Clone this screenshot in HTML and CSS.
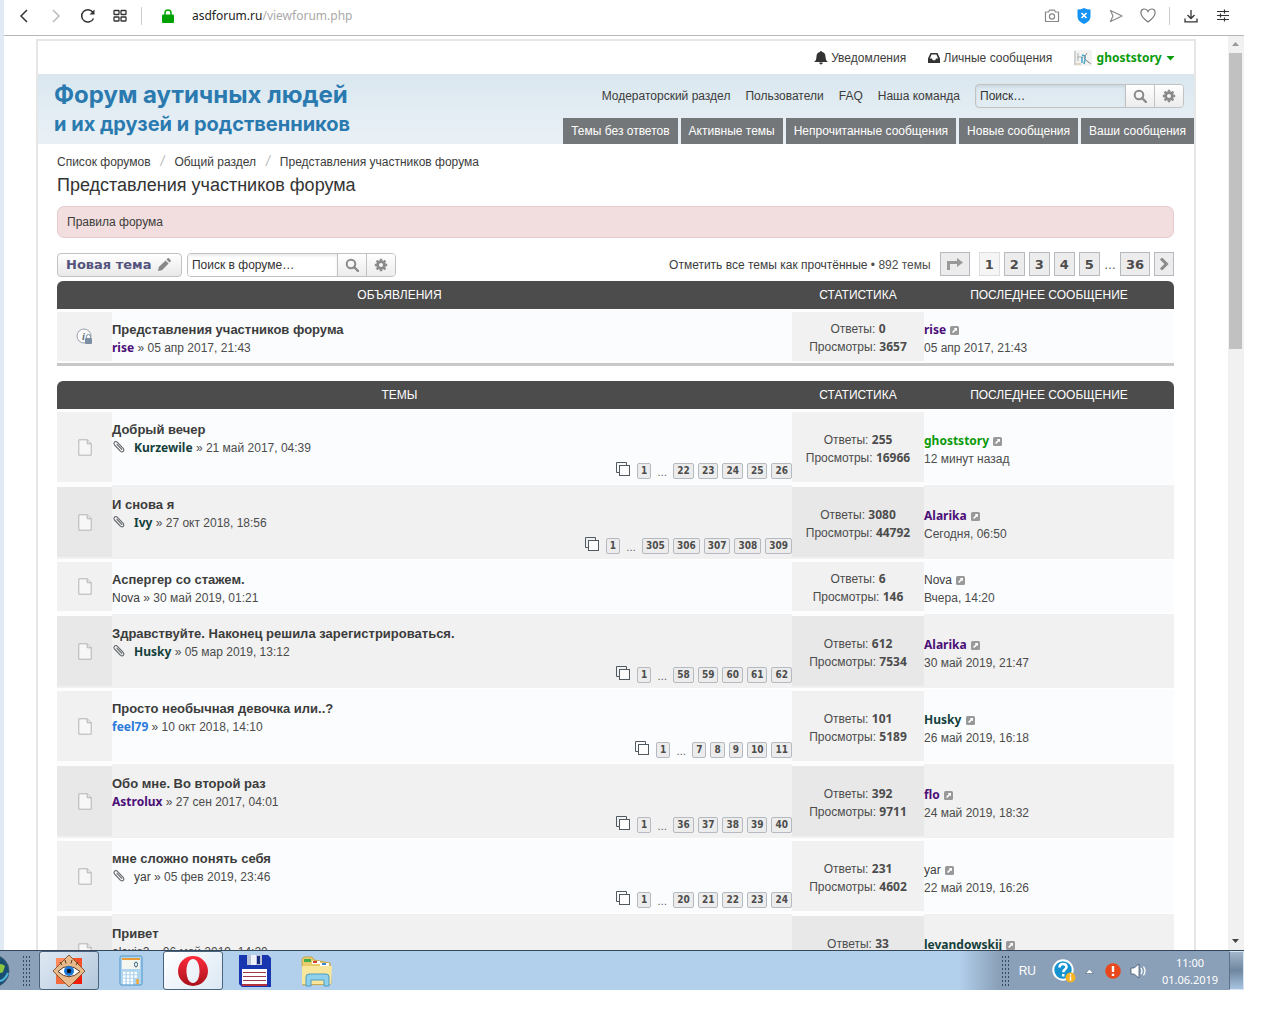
FILE: index.html
```html
<!DOCTYPE html>
<html lang="ru">
<head>
  <meta charset="UTF-8">
  <meta name="viewport" content="width=device-width, initial-scale=1">
  <title>Представления участников форума</title>
  <link rel="stylesheet" href="styles.css">
</head>
<body>
  <svg class="sprite" aria-hidden="true">
    <symbol id="i-search" viewBox="0 0 14 14"><circle cx="6" cy="6" r="4.3" fill="none" stroke="currentColor" stroke-width="2"/><path d="M9 9l4 4" stroke="currentColor" stroke-width="2.4" stroke-linecap="round"/></symbol>
    <symbol id="i-gear" viewBox="0 0 14 14"><circle cx="7" cy="7" r="3.4" fill="none" stroke="currentColor" stroke-width="2.8"/><path d="M7 .8v2M7 11.2v2M.8 7h2M11.2 7h2M2.6 2.6l1.5 1.5M9.9 9.9l1.5 1.5M2.6 11.4l1.5-1.5M9.9 4.1l1.5-1.5" stroke="currentColor" stroke-width="2.4"/></symbol>
    <symbol id="i-doc" viewBox="0 0 14 17"><path d="M.8 .8h8.6l3.8 3.8v11.6H.8z" fill="#f7f7f7" stroke="#b4b4b4"/><path d="M9.2 .8v4h4" fill="#e4e4e4" stroke="#b4b4b4"/></symbol>
    <symbol id="i-clip" viewBox="0 0 14 14"><path d="M3.2 5.6l5.2 5.6c.9.9 2.2.9 2.9.2.8-.8.8-2-.1-3L5.400 2.300C4.600 1.500 3.300 1.400 2.500 2.200c-.8.8-.7 2 .1 2.900l5.500 5.700M5 4.300l4.800 5.100" fill="none" stroke="#606468" stroke-width="1.100" stroke-linecap="round"/></symbol>
    <symbol id="i-pages" viewBox="0 0 15 15"><path d="M3.500 10.500h-3V.5h10v3" fill="none" stroke="#505860"/><rect x="3.500" y="3.500" width="10" height="10" fill="#fdfdfd" stroke="#505860"/></symbol>
    <symbol id="i-ext" viewBox="0 0 9 9"><rect width="9" height="9" rx="1.500" fill="#999"/><path d="M3.700 2H7v3.300L6 4.300 3.200 7.100 2 5.900l2.800-2.800z" fill="#fff"/></symbol>
  </svg>

  <div class="browser">
    <header class="toolbar">
      <button class="tool" aria-label="Назад"><svg width="10" height="14" viewBox="0 0 10 14"><path d="M8 1L2 7l6 6" fill="none" stroke="#333" stroke-width="1.500"/></svg></button>
      <button class="tool" aria-label="Вперёд"><svg width="10" height="14" viewBox="0 0 10 14"><path d="M2 1l6 6-6 6" fill="none" stroke="#bbb" stroke-width="1.500"/></svg></button>
      <button class="tool" aria-label="Обновить"><svg width="16" height="16" viewBox="0 0 16 16"><path d="M13.500 10.500A6.200 6.200 0 1 1 13 4.300" fill="none" stroke="#333" stroke-width="1.500"/><path d="M14.500 1.500v5h-5z" fill="#333"/></svg></button>
      <button class="tool" aria-label="Экспресс-панель"><svg width="14" height="14" viewBox="0 0 14 14" fill="none" stroke="#333" stroke-width="1.300"><rect x="1" y="1.500" width="5" height="4" rx=".5"/><rect x="8" y="1.500" width="5" height="4" rx=".5"/><rect x="1" y="8" width="5" height="4" rx=".5"/><rect x="8" y="8" width="5" height="4" rx=".5"/></svg></button>
      <span class="sep"></span>
      <svg class="lock" width="12" height="14" viewBox="0 0 12 14"><path d="M3 7V4a3 3 0 0 1 6 0v3" fill="none" stroke="#0a0" stroke-width="1.500"/><rect y="5.500" width="12" height="8.500" rx="1" fill="#00a000"/></svg>
      <p class="url">asdforum.ru<span>/viewforum.php</span></p>
      <button class="tool" aria-label="Снимок"><svg width="16" height="14" viewBox="0 0 16 14" fill="none" stroke="#888" stroke-width="1.200"><path d="M1.500 3h3l1-1.800h5l1 1.800h3v9.500h-13z" stroke-linejoin="round"/><circle cx="8" cy="7.500" r="2.600"/></svg></button>
      <button class="tool" aria-label="Блокировка рекламы"><svg width="14" height="16" viewBox="0 0 14 16"><path d="M.5 1.500q3.500 0 6.500-1.500 3 1.500 6.500 1.500v7Q13.500 13 7 16 .5 13 .5 8.500z" fill="#1493f5"/><path d="M4.500 5l5 5m0-5l-5 5" stroke="#fff" stroke-width="1.600"/></svg></button>
      <button class="tool" aria-label="Отправить"><svg width="14" height="14" viewBox="0 0 14 14"><path d="M1.500 1.500L13 7 1.500 12.500 4 7z" fill="none" stroke="#888" stroke-width="1.200" stroke-linejoin="round"/></svg></button>
      <button class="tool" aria-label="Закладки"><svg width="16" height="15" viewBox="0 0 16 15"><path d="M8 14Q1 9 .9 4.800C.9 2.500 2.500 1 4.400 1 6 1 7.300 2 8 3.500 8.700 2 10 1 11.600 1c1.900 0 3.500 1.500 3.500 3.800Q15 9 8 14z" fill="none" stroke="#777" stroke-width="1.200"/></svg></button>
      <span class="sep"></span>
      <button class="tool" aria-label="Загрузки"><svg width="14" height="14" viewBox="0 0 14 14" fill="none" stroke="#333" stroke-width="1.300"><path d="M7 1v8.500M3.500 6L7 9.500 10.500 6M1 9.500v3.300h12V9.500"/></svg></button>
      <button class="tool" aria-label="Настройки"><svg width="12" height="13" viewBox="0 0 12 13" fill="none" stroke="#333" stroke-width="1.200"><path d="M0 2.500h12M0 6.500h12M0 10.500h12M7.500 .5v4M3.500 4.500v4M7.500 8.500v4"/></svg></button>
    </header>

    <div class="viewport">
      <main class="page">
        <div class="wrap">
          <nav class="userbar">
            <a href="#"><svg width="14" height="14" viewBox="0 0 14 14"><path d="M7 0q1 0 1 1c3 .6 3.500 3 3.500 5q0 3.500 2.300 5H.2Q2.500 9.500 2.500 6c0-2 .5-4.400 3.500-5Q6 0 7 0zM5.200 11.600h3.600Q8.500 13.500 7 13.500t-1.800-1.900z" fill="#333"/></svg> Уведомления</a>
            <a href="#"><svg width="12" height="12" viewBox="0 0 12 12"><path d="M2.500 1h7L12 6.500V11H0V6.500zM3.600 2.500L1.900 6.500H4l.8 1.700h2.400L8 6.500h2.100L8.400 2.500z" fill="#333" fill-rule="evenodd"/></svg> Личные сообщения</a>
            <a href="#" class="me"><svg width="18" height="16" viewBox="0 0 18 16"><rect width="18" height="16" fill="#f3f4f2"/><path d="M1 1v14M3 7h6M4 3v8" stroke="#a9b0ad"/><path d="M8 5l3 1v4l-1 4M8 7v6" stroke="#48a5cb" stroke-width="1.500" fill="none"/><path d="M13 3l-3 5 5 5M12 10l5 4" stroke="#8a9797" fill="none"/><path d="M2 14h5" stroke="#d6b79a"/></svg> <b>ghoststory</b> <svg width="9" height="5" viewBox="0 0 8 5"><path d="M0 0h8L4 4.500z" fill="#0a9a0a"/></svg></a>
          </nav>

          <header class="banner">
            <h1 class="logo">Форум аутичных людей<small>и их друзей и родственников</small></h1>
            <div class="banner-right">
              <div class="links">
                <a href="#">Модераторский раздел</a>
                <a href="#">Пользователи</a>
                <a href="#">FAQ</a>
                <a href="#">Наша команда</a>
                <form class="search">
                  <input type="text" aria-label="Поиск" placeholder="Поиск…">
                  <button type="button" aria-label="Искать"><svg width="14" height="14"><use href="#i-search"/></svg></button>
                  <button type="button" aria-label="Расширенный поиск"><svg width="14" height="14"><use href="#i-gear"/></svg></button>
                </form>
              </div>
              <nav class="tabs">
                <a href="#">Темы без ответов</a>
                <a href="#">Активные темы</a>
                <a href="#">Непрочитанные сообщения</a>
                <a href="#">Новые сообщения</a>
                <a href="#">Ваши сообщения</a>
              </nav>
            </div>
          </header>

          <div class="content">
            <nav class="crumbs">
              <a href="#">Список форумов</a><i>/</i><a href="#">Общий раздел</a><i>/</i><a href="#">Представления участников форума</a>
            </nav>
            <h2>Представления участников форума</h2>
            <div class="rules"><a href="#">Правила форума</a></div>

            <div class="actions">
              <button class="new-topic">Новая тема <svg width="13" height="13" viewBox="0 0 12 12"><path d="M0 12l.8-3.600L7 2.200 9.800 5 3.600 11.200zM7.800 1.400L9 .2q.6-.4 1.200.2l1.400 1.400q.6.6.2 1.200L10.600 4.200z" fill="#888"/></svg></button>
              <form class="search light">
                <input type="text" aria-label="Поиск в форуме" placeholder="Поиск в форуме…">
                <button type="button" aria-label="Искать"><svg width="14" height="14"><use href="#i-search"/></svg></button>
                <button type="button" aria-label="Расширенный поиск"><svg width="14" height="14"><use href="#i-gear"/></svg></button>
              </form>
              <p class="mark"><a href="#">Отметить все темы как прочтённые</a> • 892 темы</p>
              <nav class="pager">
                <a href="#" class="jump" aria-label="Перейти"><svg width="18" height="14" viewBox="0 0 18 14"><path d="M1 13V4h10V1l6 4.500-6 4.500V7H4v6z" fill="#999"/></svg></a>
                <a href="#" class="current">1</a>
                <a href="#">2</a>
                <a href="#">3</a>
                <a href="#">4</a>
                <a href="#">5</a>
                <span>…</span>
                <a href="#">36</a>
                <a href="#" class="next" aria-label="Следующая"><svg width="10" height="14" viewBox="0 0 10 14"><path d="M2 1.500L7.500 7 2 12.500" fill="none" stroke="#8a8a8a" stroke-width="3"/></svg></a>
              </nav>
            </div>

            <table class="topics announce">
              <colgroup><col class="c-icon"><col><col class="c-stat"><col class="c-last"></colgroup>
              <thead>
                <tr><th colspan="2">Объявления</th><th>Статистика</th><th>Последнее сообщение</th></tr>
              </thead>
              <tbody>
                <tr>
                  <td class="icon"><svg width="18" height="18" viewBox="0 0 18 18"><circle cx="8" cy="8" r="7" fill="#fafafa" stroke="#9aa3ad"/><text x="6" y="12" class="info-i">i</text><rect x="9" y="10" width="7" height="6" rx="1" fill="#7d8ea3"/><path d="M10.500 10V8.500a2 2 0 0 1 4 0V10" fill="none" stroke="#7d8ea3"/></svg></td>
                  <td class="topic"><a href="#" class="title">Представления участников форума</a><p><a href="#" class="purple">rise</a> » 05 апр 2017, 21:43</p></td>
                  <td class="stat">Ответы: <b>0</b><br>Просмотры: <b>3657</b></td>
                  <td class="last"><a href="#" class="purple">rise</a> <svg width="9" height="9"><use href="#i-ext"/></svg><br>05 апр 2017, 21:43</td>
                </tr>
              </tbody>
            </table>

            <table class="topics">
              <colgroup><col class="c-icon"><col><col class="c-stat"><col class="c-last"></colgroup>
              <thead>
                <tr><th colspan="2">Темы</th><th>Статистика</th><th>Последнее сообщение</th></tr>
              </thead>
              <tbody>
                <tr>
                  <td class="icon"><svg width="14" height="17"><use href="#i-doc"/></svg></td>
                  <td class="topic"><a href="#" class="title">Добрый вечер</a><p><svg class="clip" width="14" height="14"><use href="#i-clip"/></svg><a href="#" class="teal">Kurzewile</a> » 21 май 2017, 04:39</p>
                    <div class="pages"><svg width="15" height="15"><use href="#i-pages"/></svg><a href="#">1</a><span>…</span><a href="#">22</a><a href="#">23</a><a href="#">24</a><a href="#">25</a><a href="#">26</a></div></td>
                  <td class="stat">Ответы: <b>255</b><br>Просмотры: <b>16966</b></td>
                  <td class="last"><a href="#" class="green">ghoststory</a> <svg width="9" height="9"><use href="#i-ext"/></svg><br>12 минут назад</td>
                </tr>
                <tr>
                  <td class="icon"><svg width="14" height="17"><use href="#i-doc"/></svg></td>
                  <td class="topic"><a href="#" class="title">И снова я</a><p><svg class="clip" width="14" height="14"><use href="#i-clip"/></svg><a href="#" class="teal">Ivy</a> » 27 окт 2018, 18:56</p>
                    <div class="pages"><svg width="15" height="15"><use href="#i-pages"/></svg><a href="#">1</a><span>…</span><a href="#">305</a><a href="#">306</a><a href="#">307</a><a href="#">308</a><a href="#">309</a></div></td>
                  <td class="stat">Ответы: <b>3080</b><br>Просмотры: <b>44792</b></td>
                  <td class="last"><a href="#" class="purple">Alarika</a> <svg width="9" height="9"><use href="#i-ext"/></svg><br>Сегодня, 06:50</td>
                </tr>
                <tr>
                  <td class="icon"><svg width="14" height="17"><use href="#i-doc"/></svg></td>
                  <td class="topic"><a href="#" class="title">Аспергер со стажем.</a><p><a href="#">Nova</a> » 30 май 2019, 01:21</p></td>
                  <td class="stat">Ответы: <b>6</b><br>Просмотры: <b>146</b></td>
                  <td class="last"><a href="#">Nova</a> <svg width="9" height="9"><use href="#i-ext"/></svg><br>Вчера, 14:20</td>
                </tr>
                <tr>
                  <td class="icon"><svg width="14" height="17"><use href="#i-doc"/></svg></td>
                  <td class="topic"><a href="#" class="title">Здравствуйте. Наконец решила зарегистрироваться.</a><p><svg class="clip" width="14" height="14"><use href="#i-clip"/></svg><a href="#" class="teal">Husky</a> » 05 мар 2019, 13:12</p>
                    <div class="pages"><svg width="15" height="15"><use href="#i-pages"/></svg><a href="#">1</a><span>…</span><a href="#">58</a><a href="#">59</a><a href="#">60</a><a href="#">61</a><a href="#">62</a></div></td>
                  <td class="stat">Ответы: <b>612</b><br>Просмотры: <b>7534</b></td>
                  <td class="last"><a href="#" class="purple">Alarika</a> <svg width="9" height="9"><use href="#i-ext"/></svg><br>30 май 2019, 21:47</td>
                </tr>
                <tr>
                  <td class="icon"><svg width="14" height="17"><use href="#i-doc"/></svg></td>
                  <td class="topic"><a href="#" class="title">Просто необычная девочка или..?</a><p><a href="#" class="blue">feel79</a> » 10 окт 2018, 14:10</p>
                    <div class="pages"><svg width="15" height="15"><use href="#i-pages"/></svg><a href="#">1</a><span>…</span><a href="#">7</a><a href="#">8</a><a href="#">9</a><a href="#">10</a><a href="#">11</a></div></td>
                  <td class="stat">Ответы: <b>101</b><br>Просмотры: <b>5189</b></td>
                  <td class="last"><a href="#" class="teal">Husky</a> <svg width="9" height="9"><use href="#i-ext"/></svg><br>26 май 2019, 16:18</td>
                </tr>
                <tr>
                  <td class="icon"><svg width="14" height="17"><use href="#i-doc"/></svg></td>
                  <td class="topic"><a href="#" class="title">Обо мне. Во второй раз</a><p><a href="#" class="purple">Astrolux</a> » 27 сен 2017, 04:01</p>
                    <div class="pages"><svg width="15" height="15"><use href="#i-pages"/></svg><a href="#">1</a><span>…</span><a href="#">36</a><a href="#">37</a><a href="#">38</a><a href="#">39</a><a href="#">40</a></div></td>
                  <td class="stat">Ответы: <b>392</b><br>Просмотры: <b>9711</b></td>
                  <td class="last"><a href="#" class="purple">flo</a> <svg width="9" height="9"><use href="#i-ext"/></svg><br>24 май 2019, 18:32</td>
                </tr>
                <tr>
                  <td class="icon"><svg width="14" height="17"><use href="#i-doc"/></svg></td>
                  <td class="topic"><a href="#" class="title">мне сложно понять себя</a><p><svg class="clip" width="14" height="14"><use href="#i-clip"/></svg><a href="#">yar</a> » 05 фев 2019, 23:46</p>
                    <div class="pages"><svg width="15" height="15"><use href="#i-pages"/></svg><a href="#">1</a><span>…</span><a href="#">20</a><a href="#">21</a><a href="#">22</a><a href="#">23</a><a href="#">24</a></div></td>
                  <td class="stat">Ответы: <b>231</b><br>Просмотры: <b>4602</b></td>
                  <td class="last"><a href="#">yar</a> <svg width="9" height="9"><use href="#i-ext"/></svg><br>22 май 2019, 16:26</td>
                </tr>
                <tr class="tall">
                  <td class="icon"><svg width="14" height="17"><use href="#i-doc"/></svg></td>
                  <td class="topic"><a href="#" class="title">Привет</a><p><a href="#">alexis2</a> » 06 май 2019, 14:20</p></td>
                  <td class="stat">Ответы: <b>33</b><br>&nbsp;</td>
                  <td class="last"><a href="#" class="teal">levandowskij</a> <svg width="9" height="9"><use href="#i-ext"/></svg><br>&nbsp;</td>
                </tr>
              </tbody>
            </table>
          </div>
        </div>
      </main>
      <div class="scrollbar">
        <svg width="15" height="16" viewBox="0 0 15 16"><path d="M4 10h7L7.500 6z" fill="#999"/></svg>
        <div class="thumb"></div>
        <svg width="15" height="16" viewBox="0 0 15 16"><path d="M4 5h7L7.500 9z" fill="#444"/></svg>
      </div>
    </div>
  </div>

  <footer class="taskbar">
    <svg class="orb" width="10" height="36" viewBox="0 0 10 36"><circle cx="-7" cy="18" r="16" fill="#194e72" stroke="#39566f"/><path d="M0 11q3 0 5 2L3 19q-1 1-3 1z" fill="#8cc63f"/><path d="M0 28q5-1 8-8" stroke="#4fb4d8" stroke-width="2" fill="none"/></svg>
    <span class="grip"></span>
    <button class="task open" aria-label="FastStone"><svg width="32" height="32" viewBox="0 0 32 32"><path d="M3 3h13v13H3z" fill="#ff8a5c"/><path d="M16 3h13v13H16z" fill="#f4502a"/><path d="M3 16h13v13H3z" fill="#f26a3a"/><path d="M16 16h13v13H16z" fill="#f01c0c"/><path d="M16 0l16 16-16 16L0 16z" fill="#e8b98a" stroke="#8a5a36"/><path d="M5 16.500Q15 6 27 16.500 16 27 5 16.500z" fill="#fff" stroke="#5a3822"/><circle cx="16" cy="16" r="5" fill="#1b78d8"/><circle cx="16" cy="16" r="2.300" fill="#051428"/><path d="M9 10L7 7M13 8.500L12 5M18 8.500L19 5M23 10l2-3" stroke="#5a3822"/></svg></button>
    <button class="task" aria-label="Калькулятор"><svg width="24" height="32" viewBox="0 0 24 32"><rect x="1" y="1" width="22" height="29" rx="1.500" fill="#aed4ee" stroke="#4a94c8"/><rect x="3" y="3" width="18" height="11" fill="#f4f6f0"/><path d="M3 4h18" stroke="#e89d3c" stroke-width="2"/><ellipse cx="17" cy="9.500" rx="1.500" ry="2.500" fill="none" stroke="#35607f"/><path d="M4 18h15M4 21.500h15M4 25h11M4 28h11" stroke="#fff" stroke-width="2.400" stroke-dasharray="2.500 1.300"/><path d="M18.500 24v5" stroke="#f0a83a" stroke-width="2.500"/></svg></button>
    <button class="task open active" aria-label="Opera"><svg width="32" height="32" viewBox="0 0 32 32"><defs><linearGradient id="op" x2="0" y2="1"><stop stop-color="#ff2b3c"/><stop offset="1" stop-color="#a8101c"/></linearGradient></defs><path d="M16 1a15 15 0 1 0 0 30 15 15 0 1 0 0-30zm0 3c4 0 6.500 5 6.500 12S20 28 16 28 9.500 23 9.500 16 12 4 16 4z" fill="url(#op)" fill-rule="evenodd"/></svg></button>
    <button class="task" aria-label="Total Commander"><svg width="32" height="32" viewBox="0 0 32 32"><path d="M0 0h29l3 3v29H3l-3-3z" fill="#1836b0"/><path d="M8 0h15v10H8z" fill="#b9c3d8"/><path d="M12 0h5v10h-5z" fill="#eef1f8"/><path d="M18 1h3v8h-3z" fill="#1a2c80"/><path d="M3 14h25v15H3z" fill="#fff"/><path d="M4 17.500h23M4 21.500h23M4 25.500h23" stroke="#a03a4a"/><path d="M3 29h25v2H3z" fill="#b4323c"/></svg></button>
    <button class="task" aria-label="Проводник"><svg width="34" height="32" viewBox="0 0 34 32"><path d="M2 4l2-2h8l2 3 16 3 1 21-28 1z" fill="#e9cc6c" stroke="#c9a545"/><path d="M4 4h7v3H4z" fill="#3fae49"/><path d="M12 6h8v3h-8zM20 8h9v3h-9z" fill="#fff"/><path d="M13 6h4v2h-4z" fill="#d0402c"/><path d="M22 8h4v2h-4z" fill="#3a86d0"/><path d="M2 11h30l-1 18H2z" fill="#f8e69c"/><path d="M6 31V22q0-3 3-3h17q3 0 3 3v9h-5v-6H11v6z" fill="#8fd0ec" stroke="#4d9cc2"/></svg></button>
    <div class="tray">
      <span class="grip"></span>
      <span class="lang">RU</span>
      <svg width="24" height="24" viewBox="0 0 24 24"><circle cx="11" cy="11" r="9.700" fill="#1592d0" stroke="#fff" stroke-width="2"/><path d="M7.500 8.500Q7.500 5 11 5t3.500 3c0 2.500-3.300 2.500-3.300 5.200M11.200 15v2.500" fill="none" stroke="#fff" stroke-width="2.500"/><circle cx="18.500" cy="18.500" r="5" fill="#f5b324"/><path d="M18.500 15v1.500M18.500 17.500v4" stroke="#fff" stroke-width="1.500"/></svg>
      <svg class="more" width="9" height="6" viewBox="0 0 9 6"><path d="M.5 5.500h8L4.500 1z" fill="#fff" stroke="#56697f" stroke-width=".6"/></svg>
      <svg width="16" height="16" viewBox="0 0 16 16"><circle cx="8" cy="8" r="7.800" fill="#e8481c"/><path d="M8 3v6M8 10.800v2.200" stroke="#fff" stroke-width="2.400"/></svg>
      <svg width="17" height="16" viewBox="0 0 17 16"><path d="M1 5h3l5-4v14l-5-4H1z" fill="#fff" stroke="#45566b" stroke-width=".8"/><path d="M11 5q2 3 0 6M13.500 3.500q3 4.500 0 9" fill="none" stroke="#fff" stroke-width="1.300"/></svg>
      <p class="clock">11:00<br>01.06.2019</p>
      <button class="desk" aria-label="Свернуть все окна"></button>
    </div>
  </footer>
</body>
</html>
```

FILE: styles.css
```css
* {
  margin: 0;
  padding: 0;
  box-sizing: border-box;
}
body {
  display: flex;
  flex-direction: column;
  height: 100vh;
  padding: 0 36px 34px 0;
  overflow: hidden;
  background: #fff;
  color: #4c4c4c;
  font-family: "Liberation Sans", Arial, sans-serif;
  font-size: 12px;
  line-height: 18px;
}
a {
  color: #3c3c3c;
  text-decoration: none;
}
button {
  font: inherit;
  border: 0;
  background: none;
}
.sprite {
  position: absolute;
  width: 0;
  height: 0;
}

/* browser window */
.browser {
  flex: 1;
  min-height: 0;
  display: flex;
  flex-direction: column;
  border-left: 4px solid #e1eaf4;
}
.toolbar {
  display: flex;
  align-items: center;
  height: 36px;
  padding: 0 10px 4px 9px;
  gap: 10px;
  border-bottom: 1px solid #b4b8bc;
}
.tool {
  display: flex;
  align-items: center;
  justify-content: center;
  width: 22px;
  height: 22px;
}
.sep {
  width: 1px;
  height: 18px;
  background: #ccc;
}
.lock {
  margin: 0 8px 0 10px;
}
.url {
  flex: 1;
  color: #222;
  font-family: "Noto Sans", sans-serif;
}
.url span {
  color: #aaa;
}
.viewport {
  flex: 1;
  min-height: 0;
  display: flex;
}
.page {
  flex: 1;
  overflow: hidden;
  padding: 3px 32px 0;
}
.wrap {
  border: 2px solid #e6e6e6;
}
.scrollbar {
  display: flex;
  flex-direction: column;
  width: 16px;
  background: #f1f1f1;
}
.scrollbar svg {
  flex: none;
}
.scrollbar .thumb {
  height: 296px;
  margin: 1px 2px auto 1px;
  background: #c1c1c1;
}

/* header */
.userbar {
  display: flex;
  justify-content: flex-end;
  align-items: center;
  gap: 22px;
  height: 33px;
  padding-right: 19px;
}
.userbar svg {
  vertical-align: middle;
}
.me b {
  margin: 0 1px;
  color: #0a9a0a;
}
.banner {
  display: flex;
  justify-content: space-between;
  height: 70px;
  background: linear-gradient(#dae7ef, #eaf1f6);
}
.logo {
  padding: 5px 0 0 16px;
  color: #2a7ab0;
  font-family: Inter, sans-serif;
  font-size: 24px;
  line-height: 32px;
  white-space: nowrap;
}
.logo small {
  display: block;
  font-size: 20px;
  line-height: 26px;
}
.banner-right {
  display: flex;
  flex-direction: column;
  justify-content: space-between;
  align-items: flex-end;
}
.links {
  display: flex;
  align-items: center;
  gap: 15px;
  padding: 10px 10px 0 0;
}
.search {
  display: flex;
  height: 24px;
  border: 1px solid #c2c2c2;
  border-radius: 4px;
  overflow: hidden;
}
.search input {
  width: 149px;
  padding: 0 4px;
  border: 0;
  background: transparent;
  box-shadow: inset 0 2px 3px rgba(0, 0, 0, 0.08);
  color: #333;
  font: inherit;
}
.search input::placeholder {
  color: #333;
}
.search button {
  display: flex;
  align-items: center;
  justify-content: center;
  width: 29px;
  border-left: 1px solid #c2c2c2;
  background: linear-gradient(#fff, #ececec);
  color: #8a8a8a;
}
.search.light input {
  background: #fff;
}
.tabs {
  display: flex;
  gap: 3px;
}
.tabs a {
  padding: 0 8px;
  background: #74777a;
  color: #fff;
  line-height: 26px;
}

/* forum */
.content {
  padding: 8px 20px 0 19px;
}
.crumbs i {
  margin: 0 10px;
  color: #bbb;
  font-size: 14px;
}
h2 {
  margin-top: 3px;
  color: #333;
  font-size: 18px;
  font-weight: normal;
  line-height: 22px;
}
.rules {
  margin: 10px 0 15px;
  padding: 6px 9px;
  border: 1px solid #e6ccce;
  border-radius: 7px;
  background: #f2dede;
}
.actions {
  display: flex;
  align-items: center;
  height: 24px;
  margin-bottom: 4px;
}
.new-topic {
  height: 24px;
  margin-right: 5px;
  padding: 0 10px 0 8px;
  border: 1px solid #c2c2c2;
  border-radius: 4px;
  background: linear-gradient(#fff, #e9e9e9);
  color: #54547e;
  font-family: "DejaVu Sans", Verdana, sans-serif;
  font-size: 13px;
  font-weight: bold;
}
.new-topic svg {
  margin-left: 2px;
  vertical-align: -2px;
}
.mark {
  flex: 1;
  text-align: right;
}
.pager {
  display: flex;
  gap: 4px;
  margin-left: 9px;
}
.pager a {
  min-width: 21px;
  height: 24px;
  padding: 0 5px;
  border: 1px solid #b4bac0;
  background: #ececec;
  color: #4c4c4c;
  font-family: "DejaVu Sans", Verdana, sans-serif;
  font-size: 13px;
  font-weight: bold;
  line-height: 23px;
  text-align: center;
}
.pager .current {
  background: #f5f5f5;
  border-color: #ddd;
}
.pager span {
  line-height: 26px;
}
.pager .jump,
.pager .next {
  display: flex;
  align-items: center;
}
.pager .jump {
  margin-right: 5px;
}
.pager .next {
  min-width: 20px;
  padding: 0 4px;
}

.topics {
  width: 100%;
  border-collapse: separate;
  border-spacing: 0;
  table-layout: fixed;
}
.c-icon {
  width: 55px;
}
.c-stat {
  width: 132px;
}
.c-last {
  width: 250px;
}
.topics th {
  height: 28px;
  background: #4c4c4c;
  color: #fff;
  font-weight: normal;
  text-transform: uppercase;
}
.topics th:first-child {
  padding-right: 50px;
  border-top-left-radius: 6px;
}
.topics th:last-child {
  border-top-right-radius: 6px;
}
.topics td {
  border-top: 1px solid #fff;
  background: #fbfcfe;
}
.topics tr:nth-child(even) td {
  background: #f1f1f1;
}
.topics td.icon,
.topics td.stat {
  border-top: 3px solid #fdfdfd;
  border-bottom: 2px solid #fdfdfd;
  background: #f1f1f1;
  text-align: center;
}
.topics tr:nth-child(even) td.icon,
.topics tr:nth-child(even) td.stat {
  border-bottom-color: #f1f1f1;
  background: #e8e8e8;
}
.topics .stat,
.topics .last {
  padding-top: 5px;
}
.topics .stat {
  padding-top: 3px;
}
.tall td {
  height: 75px;
}
.icon svg {
  display: block;
  margin: 0 auto;
}
.info-i {
  fill: #6b7683;
  font: italic bold 11px "Liberation Serif", serif;
}
.topic {
  padding: 10px 0 5px;
  line-height: 19px;
  vertical-align: top;
}
.title {
  display: block;
  font-size: 13px;
  font-weight: bold;
}
.clip {
  margin-right: 8px;
  vertical-align: -2px;
}
.announce {
  margin-bottom: 15px;
  border-bottom: 3px solid #c8c8c8;
}
.pages {
  display: flex;
  justify-content: flex-end;
  gap: 4px;
  height: 21px;
  padding-top: 5px;
}
.pages svg {
  margin: -1px 2px 0 0;
}
.pages a {
  height: 16px;
  padding: 0 3px;
  border: 1px solid #b4bac0;
  border-radius: 2px;
  background: #ececec;
  color: #4c4c4c;
  font-family: "DejaVu Sans Condensed", Verdana, sans-serif;
  font-size: 10px;
  font-weight: bold;
  line-height: 14px;
}
.pages span {
  margin: 0 2px;
  font-size: 10px;
}
.stat b,
.me b,
.purple,
.teal,
.green,
.blue {
  font-family: "Noto Sans", sans-serif;
  font-weight: bold;
  line-height: 1;
}
.purple {
  color: #4b0f78;
}
.teal {
  color: #14403c;
}
.green {
  color: #0a9a0a;
}
.blue {
  color: #2a7ad8;
}
.last svg {
  margin-left: 1px;
  vertical-align: -1px;
}

/* taskbar */
.taskbar {
  display: flex;
  align-items: center;
  gap: 2px;
  height: 40px;
  border-top: 1px solid #33475a;
  background: linear-gradient(90deg, #8ba1b9, #8ba1b9 36px, #b2cfec 100px, #b2cfec calc(100% - 285px), #8aa0b8 calc(100% - 245px));
}
.grip {
  width: 9px;
  height: 31px;
  background: radial-gradient(circle, #3a4a5c 1px, transparent 1px) 0 0 / 3px 4px;
}
.taskbar > .grip {
  margin: 0 6px 0 10px;
}
.task {
  display: flex;
  align-items: center;
  justify-content: center;
  width: 60px;
  height: 39px;
  border: 1px solid transparent;
  border-radius: 3px;
}
.task.open {
  border-color: #4b637c;
  background: linear-gradient(135deg, #dfe9f3, #b3c7dc);
}
.task.active {
  background: linear-gradient(135deg, #fff, #dbe8f4);
}
.tray {
  display: flex;
  align-items: center;
  gap: 9px;
  height: 100%;
  margin-left: auto;
  color: #fff;
}
.lang {
  margin-right: 7px;
}
.more {
  margin-right: 2px;
}
.clock {
  width: 60px;
  margin-left: 4px;
  font-family: "Noto Sans", sans-serif;
  font-size: 11px;
  line-height: 17px;
  text-align: center;
}
.desk {
  width: 15px;
  height: 100%;
  border: 1px solid #d7e4f1;
  border-left-color: #5c7189;
  background: linear-gradient(#a3b6ca, #6f869f 50%, #a9c4e0);
}
```
